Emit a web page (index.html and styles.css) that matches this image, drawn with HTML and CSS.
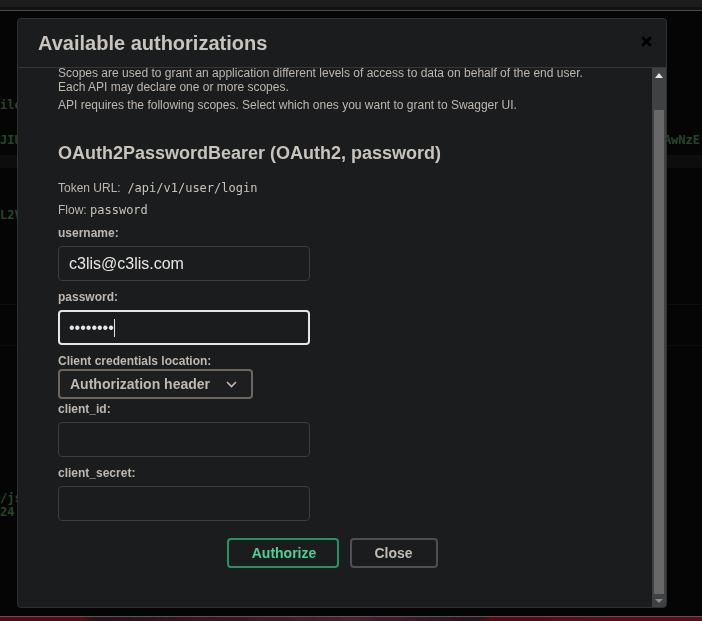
FILE: index.html
```html
<!DOCTYPE html>
<html lang="en">
<head>
<meta charset="utf-8">
<title>Available authorizations</title>
<link rel="stylesheet" href="styles.css">
</head>
<body>
<div class="page">
  <div class="topbar"></div>
  <div class="topgap"></div>
  <div class="topline"></div>
  <div class="bg-content">
    <div class="sp sp-87"></div>
    <div class="bg-row"><span>ile/</span><span></span></div>
    <div class="sp sp-21"></div>
    <div class="bg-row"><span>JIU</span><span>AwNzE</span></div>
    <div class="sp sp-8"></div>
    <div class="band"></div>
    <div class="sp sp-40"></div>
    <div class="bg-row"><span>L2V</span><span></span></div>
    <div class="sp sp-82"></div>
    <div class="hline"></div>
    <div class="sp sp-40"></div>
    <div class="hline"></div>
    <div class="sp sp-145"></div>
    <div class="bg-row"><span>/js</span><span></span></div>
    <div class="bg-row"><span>24:</span><span></span></div>
    <div class="fill"></div>
  </div>
  <div class="bottomline"></div>
  <div class="bottomstrip"></div>
</div>

<div class="modal">
  <div class="modal-header">
    <h3 class="modal-title">Available authorizations</h3>
    <svg class="close-x" width="11" height="11" viewBox="0 0 11 11"><path d="M1.2 1.2 L9.8 9.8 M9.8 1.2 L1.2 9.8" stroke="#000" stroke-width="2.8" stroke-linecap="butt"/></svg>
  </div>
  <div class="modal-body">
    <div class="content">
      <div class="inner">
        <p class="desc">Scopes are used to grant an application different levels of access to data on behalf of the end user.<br>Each API may declare one or more scopes.</p>
        <p class="desc desc-2">API requires the following scopes. Select which ones you want to grant to Swagger UI.</p>
        <h4 class="scheme">OAuth2PasswordBearer (OAuth2, password)</h4>
        <p class="info">Token URL:&nbsp; <code>/api/v1/user/login</code></p>
        <p class="info">Flow: <code>password</code></p>
        <label class="lbl">username:</label>
        <div class="field">c3lis@c3lis.com</div>
        <label class="lbl">password:</label>
        <div class="field field-focus"><span class="dots">••••••••</span><span class="caret"></span></div>
        <label class="lbl lbl-tight">Client credentials location:</label>
        <div class="select"><span>Authorization header</span><svg width="11" height="7" viewBox="0 0 11 7"><path d="M1 1 L5.5 5.5 L10 1" fill="none" stroke="#c0bab2" stroke-width="1.6"/></svg></div>
        <label class="lbl lbl-after-select">client_id:</label>
        <div class="field"></div>
        <label class="lbl">client_secret:</label>
        <div class="field"></div>
        <div class="btns">
          <button class="btn btn-auth">Authorize</button>
          <button class="btn btn-close">Close</button>
        </div>
      </div>
    </div>
    <div class="scrollbar">
      <div class="sb-btn"><span class="tri-up"></span></div>
      <div class="sb-track">
        <div class="sb-thumb"></div>
      </div>
      <div class="sb-btn sb-btn-down"><span class="tri-down"></span></div>
    </div>
  </div>
</div>
</body>
</html>
```
FILE: styles.css
```css
* { box-sizing: border-box; }
html, body { margin: 0; padding: 0; }
body {
  background: #050505;
  font-family: "Liberation Sans", Arial, sans-serif;
  overflow: hidden;
  width: 702px;
  height: 621px;
}
.page {
  height: 621px;
  display: flex;
  flex-direction: column;
}
.topbar { height: 7px; background: #1d1e1f; }
.topgap { height: 3px; background: #121212; }
.topline { height: 1px; background: #4c4c4c; }
.bg-content {
  flex: 1;
  display: flex;
  flex-direction: column;
  font-family: "DejaVu Sans Mono", monospace;
  font-size: 12px;
  color: #24452a;
  font-weight: bold;
}
.sp-87 { height: 87px; }
.sp-21 { height: 21px; }
.sp-8 { height: 8px; }
.sp-40 { height: 40px; }
.sp-82 { height: 82px; }
.sp-145 { height: 145px; }
.bg-row {
  height: 14px;
  line-height: 14px;
  display: flex;
  justify-content: space-between;
  padding-right: 2px;
  white-space: nowrap;
}
.band { height: 13px; background: #0d0d0d; }
.hline { height: 1px; background: #0e0e0e; }
.fill { flex: 1; }
.bottomline { height: 1px; background: #575757; }
.bottomstrip {
  height: 4px;
  background: linear-gradient(90deg, #5a0b12 0%, #5a0b12 11%, #2a0f1c 14%, #3b1420 30%, #4a2030 50%, #2b1020 68%, #5a0b12 70%, #5e0c14 100%);
}

/* modal overlay */
.modal {
  position: fixed;
  left: 17px;
  top: 18px;
  width: 650px;
  height: 590px;
  background: #1b1c1e;
  border: 1px solid #2f3133;
  border-radius: 4px;
  display: flex;
  flex-direction: column;
  overflow: hidden;
}
.modal-header {
  height: 49px;
  flex: none;
  border-bottom: 1px solid #35373a;
  display: flex;
  align-items: center;
  justify-content: space-between;
  padding: 0 14px 0 20px;
}
.modal-title {
  margin: 0;
  font-size: 20px;
  font-weight: bold;
  color: #c8c3bc;
}
.close-x { display: block; margin-top: -3px; }
.modal-body {
  flex: 1;
  display: flex;
  min-height: 0;
}
.content {
  flex: 1;
  overflow: hidden;
  padding: 0 40px;
}
.inner { margin-top: -2px; }
.desc {
  margin: 0;
  font-size: 12px;
  line-height: 14px;
  color: #bdb7af;
}
.desc-2 { margin-top: 4px; }
.scheme {
  margin: 30px 0 0;
  font-size: 18px;
  line-height: 22px;
  font-weight: bold;
  color: #c8c3bc;
}
.info {
  margin: 16px 0 0;
  font-size: 12px;
  line-height: 16px;
  color: #bdb7af;
}
.info + .info { margin-top: 6px; }
.info code {
  font-family: "DejaVu Sans Mono", monospace;
  font-size: 12px;
  color: #c8c3bc;
}
.lbl {
  display: block;
  margin-top: 8px;
  margin-bottom: 5px;
  font-size: 12px;
  line-height: 16px;
  font-weight: bold;
  color: #bdb7af;
}
.info + .lbl { margin-top: 7px; }
.lbl-tight { margin-bottom: 0; }
.lbl-after-select { margin-top: 2px; margin-bottom: 5px; }
.field {
  width: 252px;
  height: 35px;
  border: 1px solid #3b3e41;
  border-radius: 4px;
  padding: 0 10px;
  display: flex;
  align-items: center;
  font-size: 16px;
  color: #e8e6e3;
  background: #1b1c1e;
}
.field-focus {
  border: 2px solid #e8e6e3;
  padding: 0 9px;
}
.dots { font-size: 16px; letter-spacing: 0; }
.caret {
  width: 1px;
  height: 18px;
  background: #e8e6e3;
}
.select {
  width: 195px;
  height: 30px;
  border: 2px solid #6d665c;
  border-radius: 4px;
  padding: 0 14px 0 10px;
  display: flex;
  align-items: center;
  justify-content: space-between;
  font-size: 14px;
  font-weight: bold;
  color: #c0bab2;
  background: #1d1e20;
}
.btns {
  margin-top: 17px;
  display: flex;
  justify-content: center;
  gap: 11px;
}
.btn {
  height: 30px;
  border-radius: 4px;
  background: transparent;
  font-family: "Liberation Sans", Arial, sans-serif;
  font-size: 14px;
  font-weight: bold;
  padding: 0;
  cursor: pointer;
}
.btn-auth {
  width: 112px;
  border: 2px solid #279263;
  color: #4fcf95;
  padding-left: 3px;
}
.btn-close {
  width: 88px;
  border: 2px solid #4b5055;
  color: #c1bbb3;
  margin-right: 6px;
}

/* fake scrollbar */
.scrollbar {
  width: 14px;
  flex: none;
  background: #3f4143;
  display: flex;
  flex-direction: column;
}
.sb-btn {
  height: 14px;
  display: flex;
  align-items: center;
  justify-content: center;
  flex: none;
}
.sb-btn-down { height: 13px; }
.tri-up {
  width: 0; height: 0;
  border-left: 4px solid transparent;
  border-right: 4px solid transparent;
  border-bottom: 5px solid #e6e6e6;
}
.tri-down {
  width: 0; height: 0;
  border-left: 4px solid transparent;
  border-right: 4px solid transparent;
  border-top: 4px solid #8a8a8a;
}
.sb-track {
  flex: 1;
  display: flex;
  flex-direction: column;
  padding: 28px 2px 0;
}
.sb-thumb {
  flex: 1;
  background: #686868;
}
```
